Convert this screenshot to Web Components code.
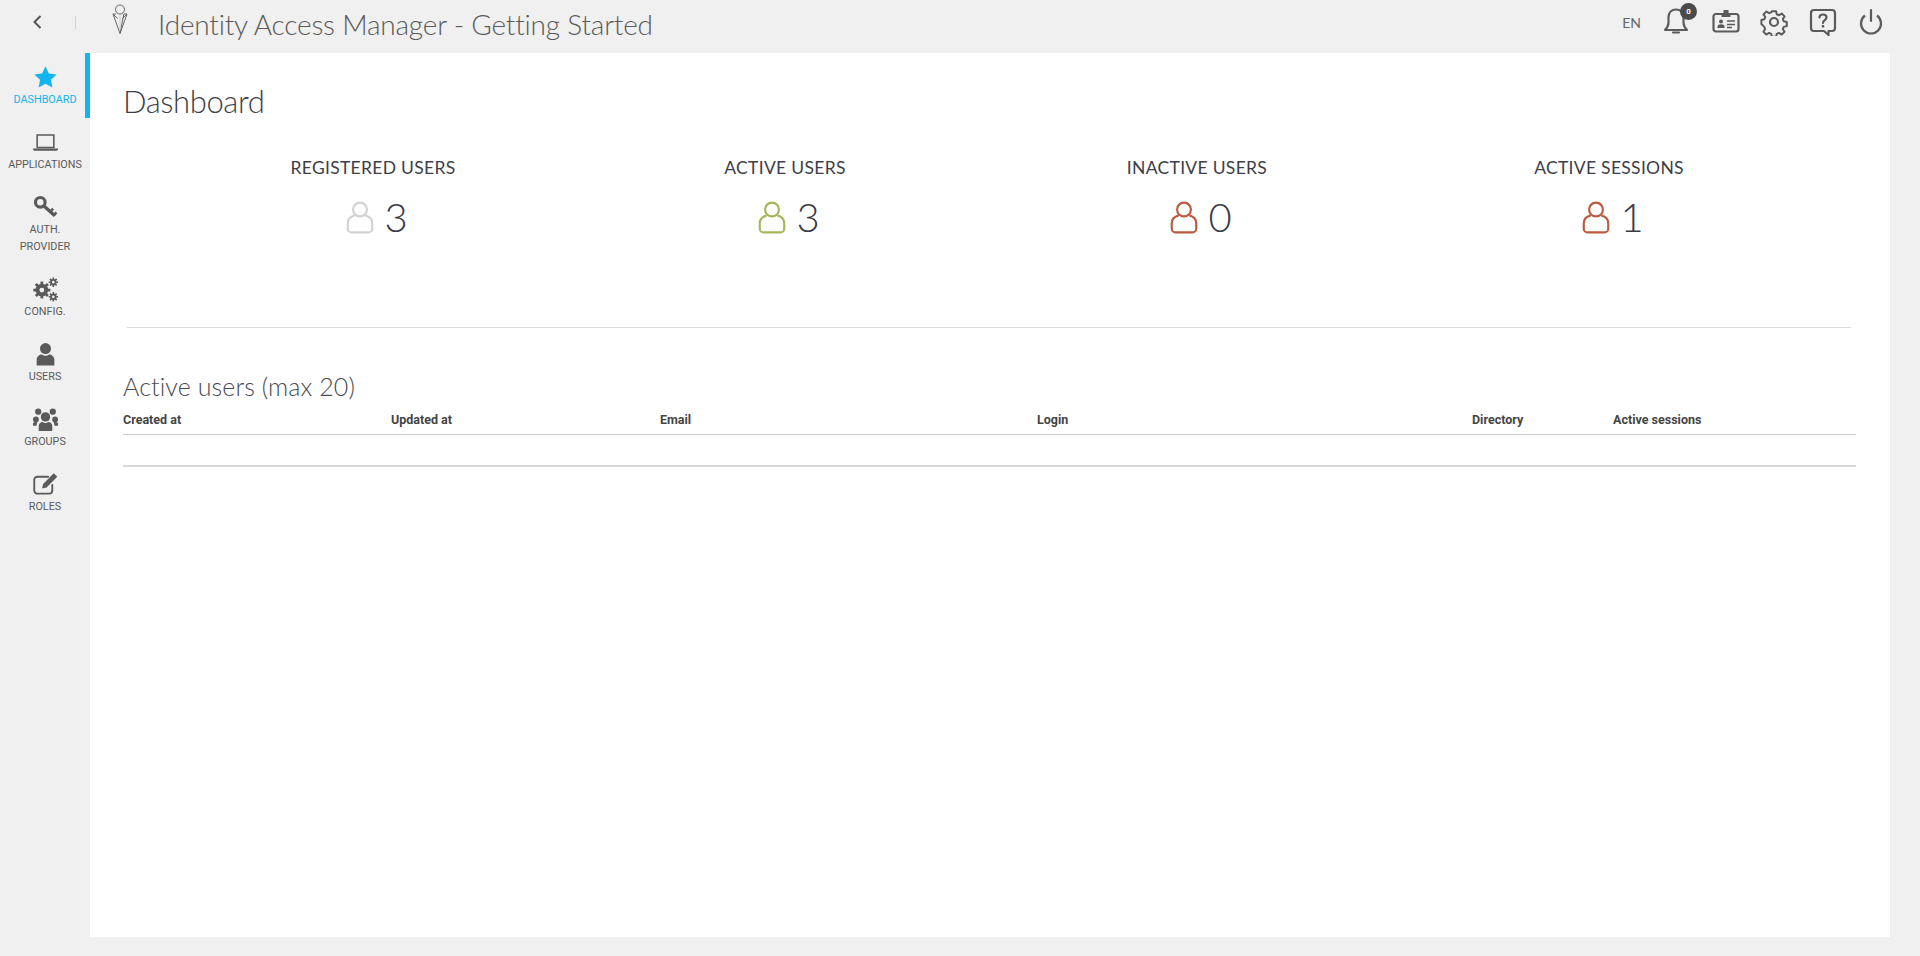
<!DOCTYPE html>
<html lang="en">
<head>
  <meta charset="UTF-8">
  <title>Identity Access Manager - Getting Started</title>
  <style>
    html, body { margin: 0; height: 100%; background: #f0f0f0; }
    body { font-family: "Lato", "Liberation Sans", sans-serif; overflow: hidden; }
  </style>
</head>
<body>
  <iam-app>
    <iam-topbar slot="top" title-text="Identity Access Manager - Getting Started"></iam-topbar>
    <iam-sidebar slot="side">
      <iam-nav-item icon="star" active>Dashboard</iam-nav-item>
      <iam-nav-item icon="laptop">Applications</iam-nav-item>
      <iam-nav-item icon="key" tall>Auth.<br>Provider</iam-nav-item>
      <iam-nav-item icon="gears">Config.</iam-nav-item>
      <iam-nav-item icon="user">Users</iam-nav-item>
      <iam-nav-item icon="users">Groups</iam-nav-item>
      <iam-nav-item icon="edit">Roles</iam-nav-item>
    </iam-sidebar>
    <iam-dashboard slot="main">
      <iam-stat label="Registered users" value="3" color="#d2d2d2"></iam-stat>
      <iam-stat label="Active users" value="3" color="#a4b85a"></iam-stat>
      <iam-stat label="Inactive users" value="0" color="#bb5a3f"></iam-stat>
      <iam-stat label="Active sessions" value="1" color="#bb5a3f"></iam-stat>
    </iam-dashboard>
  </iam-app>

  <script>
    // sidebar icons, all on a 24 box
    const NAV_ICONS = {
      star: '<path fill="currentColor" d="M12 1.200l3.200 6.900 7.500.9-5.500 5.200 1.400 7.500L12 18.100l-6.600 3.600 1.400-7.500L1.300 9l7.500-.9z"/>',
      laptop: '<path fill="none" stroke="currentColor" stroke-width="1.500" d="M4 4.800h16v12H4z"/><path fill="currentColor" d="M0 17.800h24v.8l-1.200 1.200H1.200L0 18.600z"/>',
      key: '<g fill="none" stroke="currentColor"><circle cx="7" cy="7" r="4.600" stroke-width="3"/><path stroke-width="3.200" d="M10.500 10.500L21 20"/><path stroke-width="2.400" d="M16.500 16l2.800-3M20 19.500l2.500-2.800"/></g>',
      gears: '<g fill="none" stroke="currentColor"><circle cx="8.500" cy="12.500" r="4.200" stroke-width="3.800"/><path stroke-width="2.600" d="M8.500 4.300v3M8.500 17.700v3M.3 12.500h3M13.700 12.500h3M2.700 6.700l2 2M12.300 16.300l2 2M2.700 18.300l2-2M12.300 8.700l2-2"/><circle cx="19.500" cy="5" r="2.200" stroke-width="1.800"/><path stroke-width="1.500" d="M19.500.5v1.800M19.500 7.700v1.800M15 5h1.800M22.200 5H24M16.300 1.800l1.200 1.200M21.500 7l1.200 1.200M16.300 8.200L17.500 7M21.500 3l1.200-1.200"/><circle cx="19.500" cy="19" r="2.200" stroke-width="1.800"/><path stroke-width="1.500" d="M19.500 14.500v1.800M19.500 21.700v1.800M15 19h1.800M22.200 19H24M16.300 15.800l1.200 1.200M21.500 21l1.200 1.200M16.300 22.200l1.200-1.200M21.500 17l1.200-1.200"/></g>',
      user: '<circle cx="12" cy="6.300" r="5.300" fill="currentColor"/><path fill="currentColor" d="M3.500 22.500v-5.300c0-3.400 2.800-5.200 5-5.200 1 .8 2.200 1.200 3.500 1.200s2.500-.4 3.500-1.200c2.200 0 5 1.800 5 5.200v5.300z"/>',
      users: '<g fill="currentColor"><circle cx="12" cy="9.500" r="4.500"/><path d="M5.500 23v-4.500c0-2.800 2-4.100 3.700-4.100.8.600 1.800.9 2.800.9s2-.3 2.800-.9c1.700 0 3.700 1.300 3.700 4.100V23z"/><circle cx="5" cy="4.500" r="3"/><circle cx="19" cy="4.500" r="3"/><circle cx="2.800" cy="12" r="2.800"/><circle cx="21.200" cy="12" r="2.800"/><path d="M0 18v-2.500c.8-.8 1.800-1 3-1 .4 0 .8 0 1.200.2-.5.900-.7 1.900-.7 3.300z"/><path d="M24 18v-2.500c-.8-.8-1.800-1-3-1-.4 0-.8 0-1.200.2.500.9.700 1.900.7 3.300z"/></g>',
      edit: '<path fill="none" stroke="currentColor" stroke-width="1.800" stroke-linecap="round" d="M18.500 12.500v5.300a3 3 0 0 1-3 3H4.200a3 3 0 0 1-3-3V7.500a3 3 0 0 1 3-3h10.300"/><path fill="currentColor" d="M20 1.200l3.300 3.300-10.300 10.300-4.300 1 1-4.300z"/>'
    }

    class IamApp extends HTMLElement {
      constructor () {
        super()
        this.attachShadow({ mode: 'open' }).innerHTML = `
          <style>
            :host { display: grid; grid-template: 53px 1fr / 90px 1fr 30px; height: 956px; background: #f0f0f0; }
            .top { grid-column: 1 / 4; }
            .main { grid-column: 2; background: #fff; margin-bottom: 19px; min-width: 0; }
          </style>
          <div class="top"><slot name="top"></slot></div>
          <div><slot name="side"></slot></div>
          <div class="main"><slot name="main"></slot></div>`
      }
    }

    class IamTopbar extends HTMLElement {
      connectedCallback () {
        this.attachShadow({ mode: 'open' }).innerHTML = `
          <style>
            :host { display: flex; align-items: center; box-sizing: border-box; height: 53px; padding-bottom: 9px; color: #595959; }
            .back { width: 76px; display: flex; justify-content: center; margin-left: -1px; }
            .sep { width: 1px; height: 13px; background: #d4d4d4; }
            .logo { margin-left: 34px; margin-top: -6px; }
            h1 { margin: 0 0 0 28px; font: 300 28px/44px Lato, sans-serif; letter-spacing: -.2px; color: #5a5a5a; white-space: nowrap; position: relative; top: 2px; }
            .right { margin-left: auto; display: flex; align-items: center; padding-right: 35px; }
            .lang { font: 400 14px Lato, sans-serif; color: #666; margin-right: 22px; }
            .ico { width: 28px; height: 28px; margin-left: 20.500px; position: relative; }
            .ico:first-of-type { margin-left: 0; }
            .ico svg { display: block; width: 28px; height: 28px; }
            .badge { position: absolute; top: -5px; right: -6px; width: 17px; height: 17px; border-radius: 50%; background: #4a4a4a; color: #fff; font: 700 8px/17px Roboto, sans-serif; text-align: center; }
          </style>
          <div class="back">
            <svg width="12" height="16" viewBox="0 0 12 16"><path fill="none" stroke="#555" stroke-width="2" d="M9.500 2L3.500 8l6 6"/></svg>
          </div>
          <span class="sep"></span>
          <svg class="logo" width="20" height="32" viewBox="0 0 20 32" fill="none" stroke="#666" stroke-width="1"><circle cx="10" cy="6.500" r="4.500"/><path d="M3 11h3.200M13.800 11H17L10 30.500zM3 11l7 19.500"/><path d="M3 11l4.500 4.500M17 11l-4.500 4.500"/><path stroke="#ccc" d="M10 12v15"/></svg>
          <h1>${this.getAttribute('title-text')}</h1>
          <div class="right">
            <span class="lang">EN</span>
            <div class="ico">
              <svg viewBox="0 0 28 28" fill="none" stroke="#5b5b5b" stroke-width="2.200"><path stroke-linejoin="round" d="M2 22c2-2 3.500-3.500 3.500-7.500v-5C5.500 4.500 8.800 1.500 13 1.500s7.500 3 7.500 8v5c0 4 1.500 5.500 3.500 7.500z"/><path stroke-linecap="round" d="M10 24.500h6"/></svg>
              <span class="badge">0</span>
            </div>
            <div class="ico">
              <svg viewBox="0 0 28 28" fill="none" stroke="#5b5b5b" stroke-width="2.200"><rect x="1.500" y="6" width="25" height="17.500" rx="2.500"/><path fill="#5b5b5b" stroke="none" d="M11.500 2h5v4.500h2V9h-9V6.500h2z"/><circle cx="9" cy="13.500" r="2" fill="#5b5b5b" stroke="none"/><path fill="#5b5b5b" stroke="none" d="M5.500 20v-1.500c0-1.500 1.500-2.300 3.500-2.300s3.500.8 3.500 2.300V20z"/><path stroke-width="1.500" d="M15 13h8M15 16.500h8M15 19.500h5"/></svg>
            </div>
            <div class="ico">
              <svg viewBox="0 0 28 28" fill="none" stroke="#5b5b5b" stroke-width="2.200" stroke-linejoin="round"><circle cx="14" cy="14" r="4"/><path d="M11.700 2h4.600l.8 3.500 2.400 1 3-1.900 3.200 3.200-1.900 3 1 2.400 3.400.8v4.600l-3.400.8-1 2.400 1.900 3-3.200 3.200-3-1.900-2.400 1-.8 3.400h-4.600l-.8-3.400-2.400-1-3 1.900-3.200-3.200 1.900-3-1-2.400L0 16.300v-4.600l3.300-.8 1-2.400-1.900-3 3.200-3.200 3 1.900 2.400-1z" transform="translate(1.400 1.400) scale(.9)"/></svg>
            </div>
            <div class="ico">
              <svg viewBox="0 0 28 28" fill="none" stroke="#5b5b5b" stroke-width="2.200" stroke-linejoin="round"><path d="M5 2h18a3 3 0 0 1 3 3v15a3 3 0 0 1-3 3h-3.500v4l-4.500-4H5a3 3 0 0 1-3-3V5a3 3 0 0 1 3-3z"/><path stroke-linecap="round" stroke-width="2.200" d="M10.500 9.500c0-2 1.500-3 3.500-3s3.500 1 3.500 3c0 2.800-3.500 2.500-3.500 5.500"/><path stroke-width="2.400" d="M14 17v2.500"/></svg>
            </div>
            <div class="ico">
              <svg viewBox="0 0 28 28" fill="none" stroke="#5b5b5b" stroke-width="2.200" stroke-linecap="round"><path d="M14 2v11"/><path d="M8 7.500a10 10 0 1 0 12 0" stroke-linecap="butt"/></svg>
            </div>
          </div>`
      }
    }

    class IamSidebar extends HTMLElement {
      constructor () {
        super()
        this.attachShadow({ mode: 'open' }).innerHTML = `
          <style>:host { display: flex; flex-direction: column; width: 90px; }</style>
          <slot></slot>`
      }
    }

    class IamNavItem extends HTMLElement {
      connectedCallback () {
        const icon = NAV_ICONS[this.getAttribute('icon')]
        this.attachShadow({ mode: 'open' }).innerHTML = `
          <style>
            :host { display: flex; flex-direction: column; align-items: center; box-sizing: border-box; height: 65px; padding: 12px 0 0; color: #5a5a5a; width: 90px; }
            :host([tall]) { height: 82px; }
            :host([active]) { color: #12b5ee; box-shadow: inset -5px 0 0 #12b5ee; }
            svg { width: 25px; height: 25px; display: block; margin-bottom: 1px; }
            .label { font: 400 10.800px/17px Roboto, sans-serif; text-transform: uppercase; text-align: center; white-space: nowrap; }
          </style>
          <svg viewBox="0 0 24 24">${icon}</svg>
          <div class="label"><slot></slot></div>`
      }
    }

    class IamStat extends HTMLElement {
      connectedCallback () {
        const color = this.getAttribute('color')
        this.attachShadow({ mode: 'open' }).innerHTML = `
          <style>
            :host { display: block; text-align: center; color: #3e3e48; }
            .label { font: 400 17.500px/24px Lato, sans-serif; text-transform: uppercase; letter-spacing: .3px; }
            .row { display: flex; justify-content: center; align-items: center; gap: 10px; margin-top: 14px; height: 46px; padding-left: 8px; }
            svg { width: 28px; height: 33px; display: block; }
            .num { font: 300 40px/46px Lato, sans-serif; color: #3a3a46; }
          </style>
          <div class="label">${this.getAttribute('label')}</div>
          <div class="row">
            <svg viewBox="0 0 26 31" fill="none" stroke="${color}" stroke-width="2"><circle cx="13" cy="8" r="6.500"/><path d="M8 13.500c-3.500 1-6.500 3.500-6.500 7.500v5c0 2 1.500 3.500 3.500 3.500h16c2 0 3.500-1.500 3.500-3.500v-5c0-4-3-6.500-6.500-7.500"/></svg>
            <span class="num">${this.getAttribute('value')}</span>
          </div>`
      }
    }

    class IamDashboard extends HTMLElement {
      constructor () {
        super()
        this.attachShadow({ mode: 'open' }).innerHTML = `
          <style>
            :host { display: block; padding: 28px 34px 0 33px; color: #3e3e48; }
            h2 { margin: 0; font: 300 31px/40px Lato, sans-serif; letter-spacing: -.4px; }
            .stats { display: grid; grid-template-columns: repeat(4, 412px); margin: 35px 0 0 44px; }
            hr { border: 0; border-top: 1px solid #dcdcdc; margin: 87px 5px 0 4px; }
            h3 { margin: 42px 0 0; font: 300 25px/32px Lato, sans-serif; letter-spacing: .1px; color: #4a4a52; }
            .table { display: grid; grid-template-columns: 268px 269px 377px 435px 141px 1fr; font: 700 12.500px/16px Roboto, sans-serif; color: #444; padding: 10px 0 6px; border-bottom: 1px solid #ccc; }
            .body { height: 30px; border-bottom: 2px solid #d8d8d8; }
          </style>
          <h2>Dashboard</h2>
          <div class="stats"><slot></slot></div>
          <hr>
          <h3>Active users (max 20)</h3>
          <div class="table">
            <span>Created at</span><span>Updated at</span><span>Email</span><span>Login</span><span>Directory</span><span>Active sessions</span>
          </div>
          <div class="body"></div>`
      }
    }

    customElements.define('iam-app', IamApp)
    customElements.define('iam-topbar', IamTopbar)
    customElements.define('iam-sidebar', IamSidebar)
    customElements.define('iam-nav-item', IamNavItem)
    customElements.define('iam-stat', IamStat)
    customElements.define('iam-dashboard', IamDashboard)
  </script>
</body>
</html>
